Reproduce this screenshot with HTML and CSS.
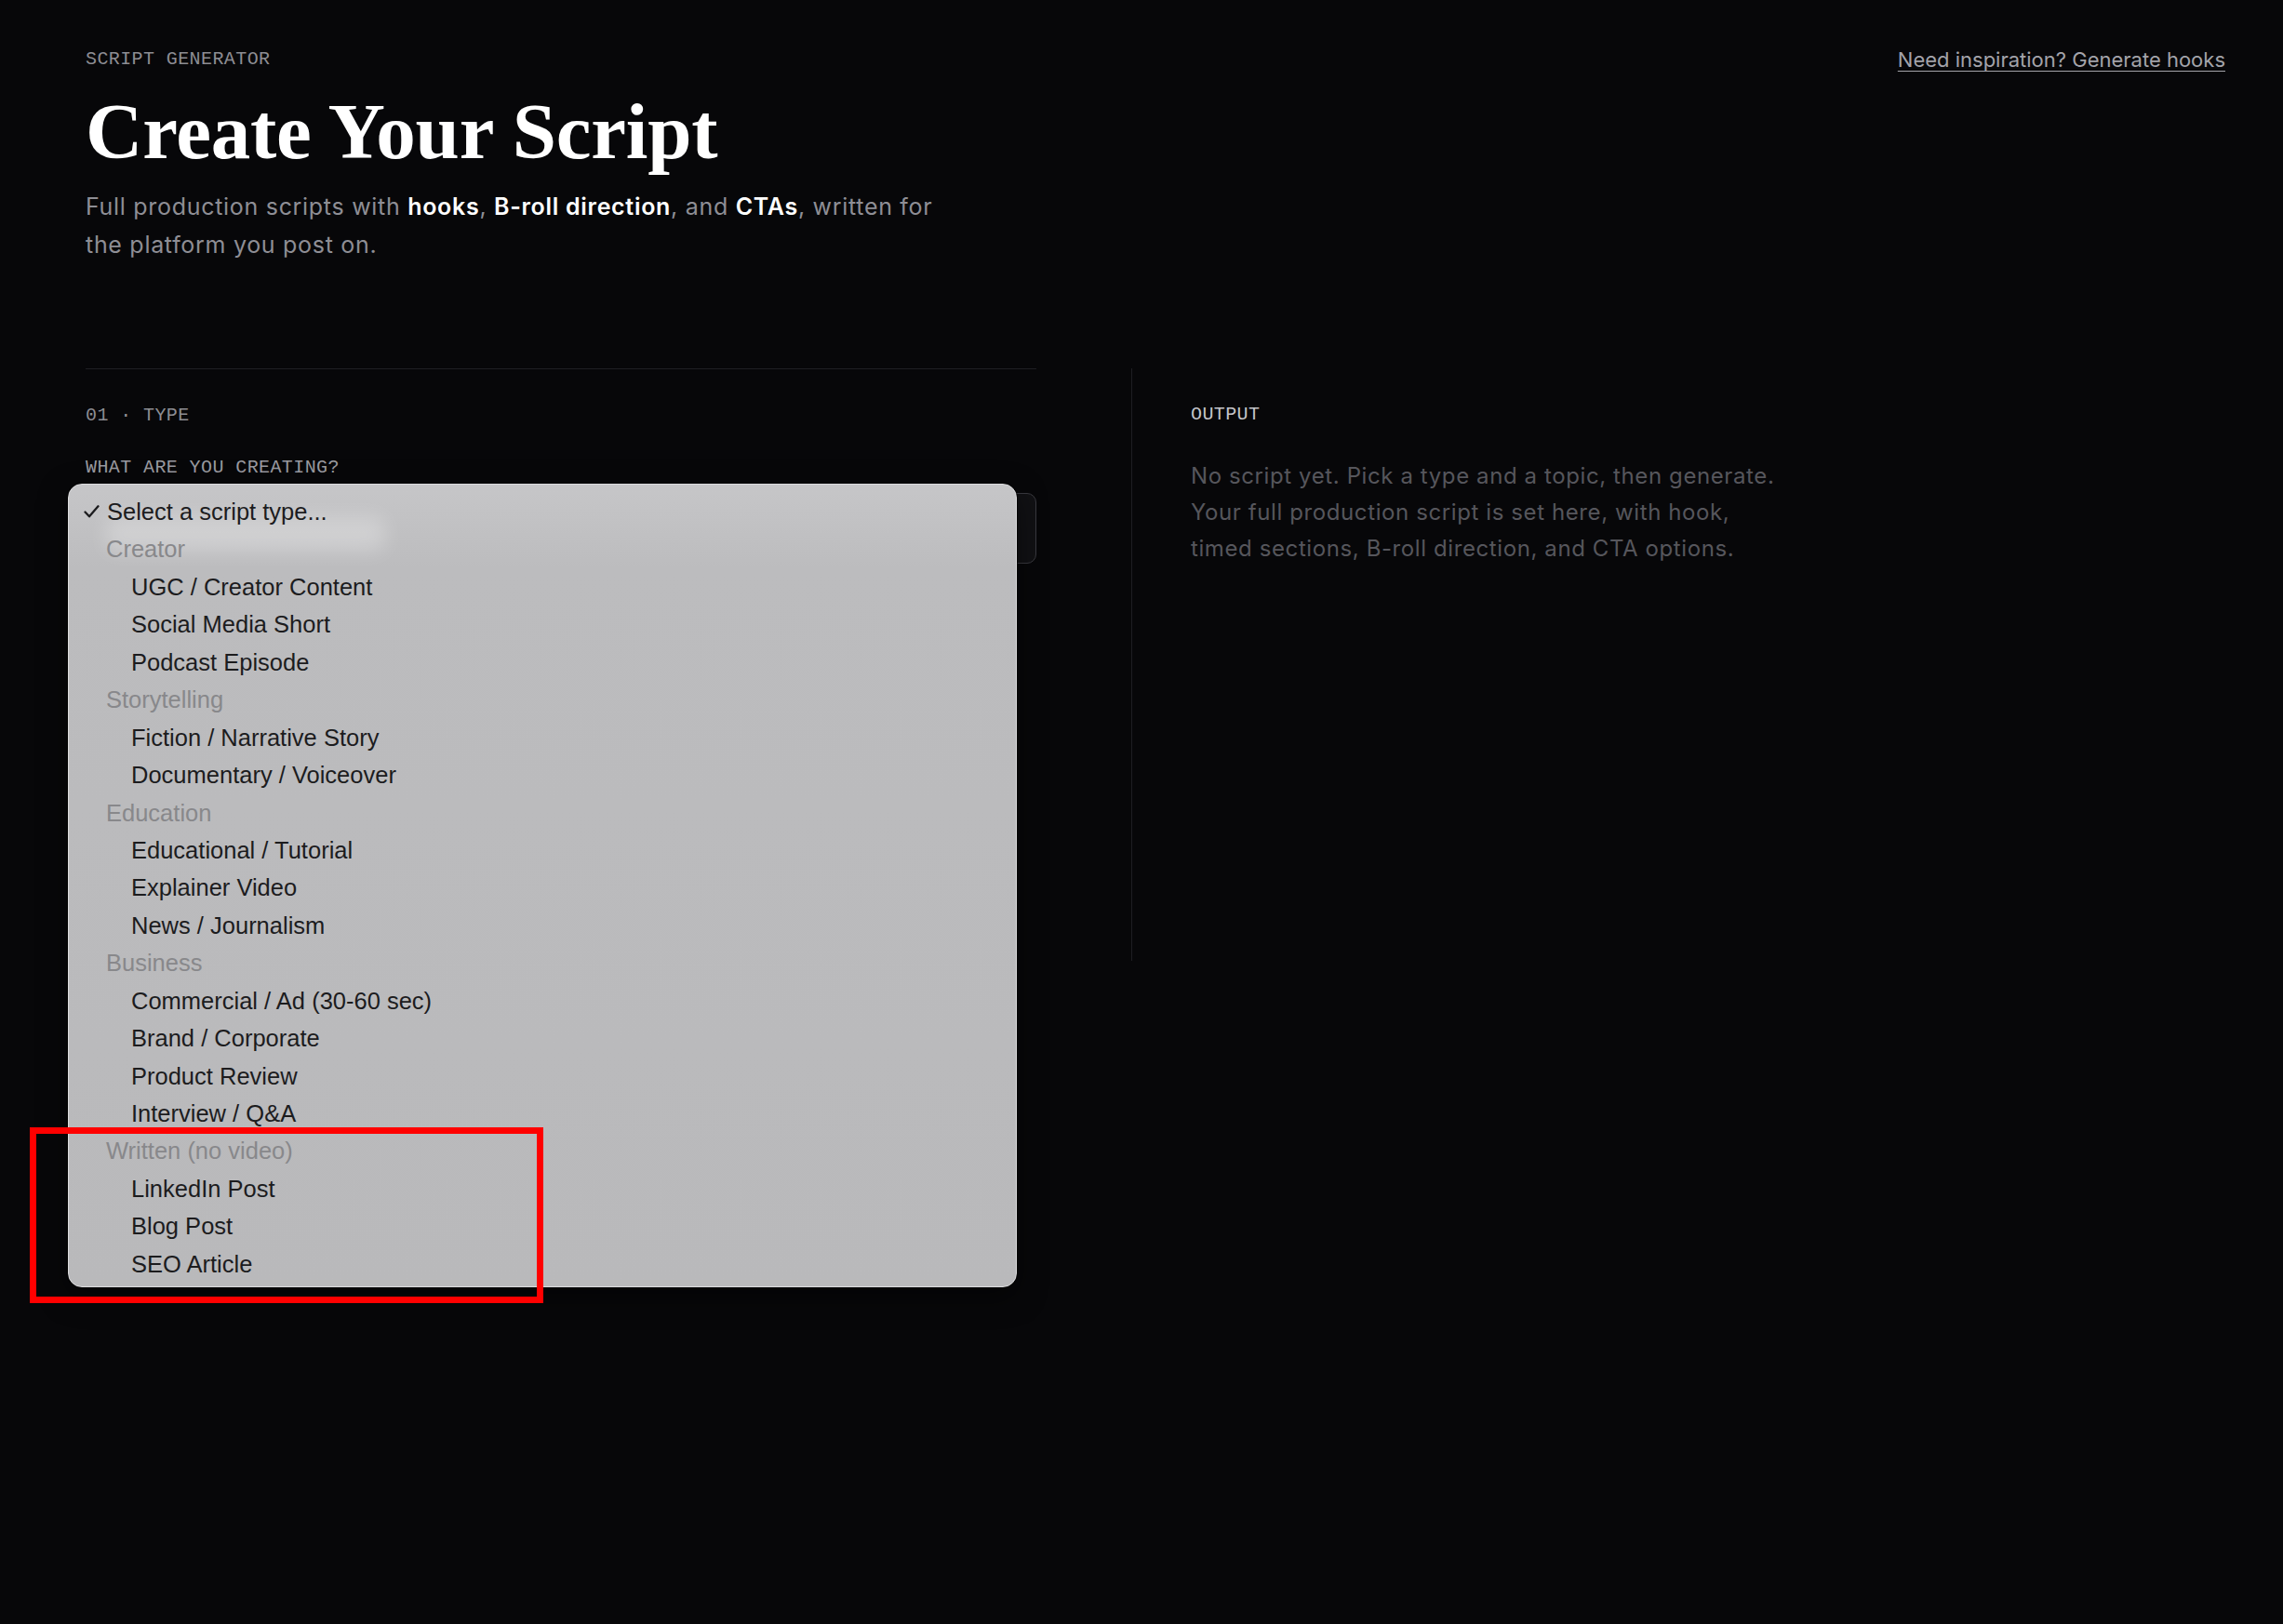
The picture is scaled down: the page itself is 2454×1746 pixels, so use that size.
FILE: index.html
```html
<!DOCTYPE html>
<html lang="en">
<head>
<meta charset="utf-8">
<title>Create Your Script</title>
<link rel="stylesheet" href="styles.css">
</head>
<body>
<div class="page">
  <header class="top">
    <div class="intro">
      <div class="eyebrow">SCRIPT GENERATOR</div>
      <h1 class="title">Create Your Script</h1>
      <p class="lede">Full production scripts with <strong>hooks</strong>, <strong>B-roll direction</strong>, and <strong>CTAs</strong>, written for the platform you post on.</p>
    </div>
    <a class="inspire" href="#">Need inspiration? Generate hooks</a>
  </header>

  <main class="workspace">
    <section class="form-col">
      <div class="step">01 · TYPE</div>
      <div class="field-label">WHAT ARE YOU CREATING?</div>
      <div class="select-box">Select a script type...</div>
    </section>
    <section class="output-col">
      <div class="step step-light">OUTPUT</div>
      <p class="empty">No script yet. Pick a type and a topic, then generate. Your full production script is set here, with hook, timed sections, B-roll direction, and CTA options.</p>
    </section>
  </main>
</div>

<div class="menu">
  <div class="menu-row selected"><span class="check"><svg width="17" height="14" viewBox="0 0 17 14"><path d="M1.5 7.5 L6 12.3 L15.5 1.3" fill="none" stroke="#1c1c1e" stroke-width="2.3" stroke-linecap="round" stroke-linejoin="round"/></svg></span>Select a script type...</div>
  <div class="menu-group">Creator</div>
  <div class="menu-item">UGC / Creator Content</div>
  <div class="menu-item">Social Media Short</div>
  <div class="menu-item">Podcast Episode</div>
  <div class="menu-group">Storytelling</div>
  <div class="menu-item">Fiction / Narrative Story</div>
  <div class="menu-item">Documentary / Voiceover</div>
  <div class="menu-group">Education</div>
  <div class="menu-item">Educational / Tutorial</div>
  <div class="menu-item">Explainer Video</div>
  <div class="menu-item">News / Journalism</div>
  <div class="menu-group">Business</div>
  <div class="menu-item">Commercial / Ad (30-60 sec)</div>
  <div class="menu-item">Brand / Corporate</div>
  <div class="menu-item">Product Review</div>
  <div class="menu-item">Interview / Q&amp;A</div>
  <div class="menu-group">Written (no video)</div>
  <div class="menu-item">LinkedIn Post</div>
  <div class="menu-item">Blog Post</div>
  <div class="menu-item">SEO Article</div>
</div>

<div class="annotation"></div>
</body>
</html>
```

FILE: styles.css
```css
* { box-sizing: border-box; }

html, body {
  margin: 0;
  padding: 0;
  background: #070709;
}

body {
  min-height: 1746px;
  font-family: Inter, "Liberation Sans", sans-serif;
  color: #e8e8ec;
  position: relative;
}

.page {
  padding: 52px 62px 0 92px;
}

.top {
  display: flex;
  justify-content: space-between;
  align-items: flex-start;
}

.eyebrow,
.step,
.field-label {
  font-family: "Liberation Mono", "DejaVu Sans Mono", monospace;
  font-size: 20px;
  line-height: 24px;
  letter-spacing: 0.4px;
  color: #8d8d93;
}

.title {
  margin: 20px 0 0;
  font-family: "Liberation Serif", serif;
  font-weight: 700;
  font-size: 85px;
  line-height: 90px;
  letter-spacing: -0.2px;
  color: #ffffff;
}

.lede {
  margin: 16px 0 0;
  max-width: 945px;
  font-size: 25px;
  line-height: 41px;
  letter-spacing: 0.7px;
  color: #8e8e95;
}

.lede strong {
  color: #ffffff;
  font-weight: 600;
}

.inspire {
  margin-top: 0;
  font-size: 22px;
  line-height: 24px;
  color: #a3a3aa;
  text-decoration: underline;
  text-underline-offset: 4px;
  text-decoration-thickness: 1px;
}

.workspace {
  margin-top: 112px;
  display: grid;
  grid-template-columns: 1022px 1fr;
  column-gap: 102px;
  min-height: 637px;
}

.form-col {
  border-top: 1px solid #1e1e23;
  padding-top: 38px;
}

.field-label {
  margin-top: 32px;
  color: #9a9aa0;
}

.select-box {
  margin-top: 15px;
  height: 76px;
  border: 1px solid #3a3a40;
  border-radius: 10px;
  background: #111114;
  padding: 0 24px;
  display: flex;
  align-items: center;
  font-size: 24px;
  color: #e6e6ea;
}

.output-col {
  border-left: 1px solid #1e1e23;
  padding: 38px 0 0 63px;
}

.step-light {
  color: #c4c4ca;
}

.empty {
  margin: 34px 0 0;
  max-width: 650px;
  font-size: 24px;
  line-height: 39px;
  letter-spacing: 0.6px;
  color: #56565c;
}

/* native select menu overlay */
.menu {
  position: absolute;
  left: 73px;
  top: 520px;
  width: 1020px;
  height: 864px;
  padding: 9px 0 6px;
  border-radius: 15px;
  border: 1px solid #dcdcde;
  background: linear-gradient(180deg, #c6c6c8 0px, #bcbcbe 90px, #b9b9bb 100%);
  box-shadow: 0 0 0 1px rgba(0, 0, 0, 0.55), 0 10px 30px rgba(0, 0, 0, 0.5);
  font-family: "Liberation Sans", Arial, sans-serif;
  font-size: 25.5px;
  color: #1c1c1e;
  overflow: hidden;
}

.menu::before {
  content: "";
  position: absolute;
  left: 40px;
  top: 34px;
  width: 300px;
  height: 38px;
  background: rgba(255, 255, 255, 0.25);
  filter: blur(10px);
  border-radius: 12px;
}

.menu-row,
.menu-group,
.menu-item {
  position: relative;
  height: 40.45px;
  line-height: 40.45px;
  white-space: nowrap;
}

.menu-row {
  display: flex;
  align-items: center;
  padding-left: 16px;
}

.check {
  width: 25px;
  display: flex;
  align-items: center;
}

.menu-group {
  padding-left: 40px;
  color: #88888b;
}

.menu-item {
  padding-left: 67px;
}

.annotation {
  position: absolute;
  left: 32px;
  top: 1212px;
  width: 552px;
  height: 189px;
  border: 7px solid #ff0000;
}
```
